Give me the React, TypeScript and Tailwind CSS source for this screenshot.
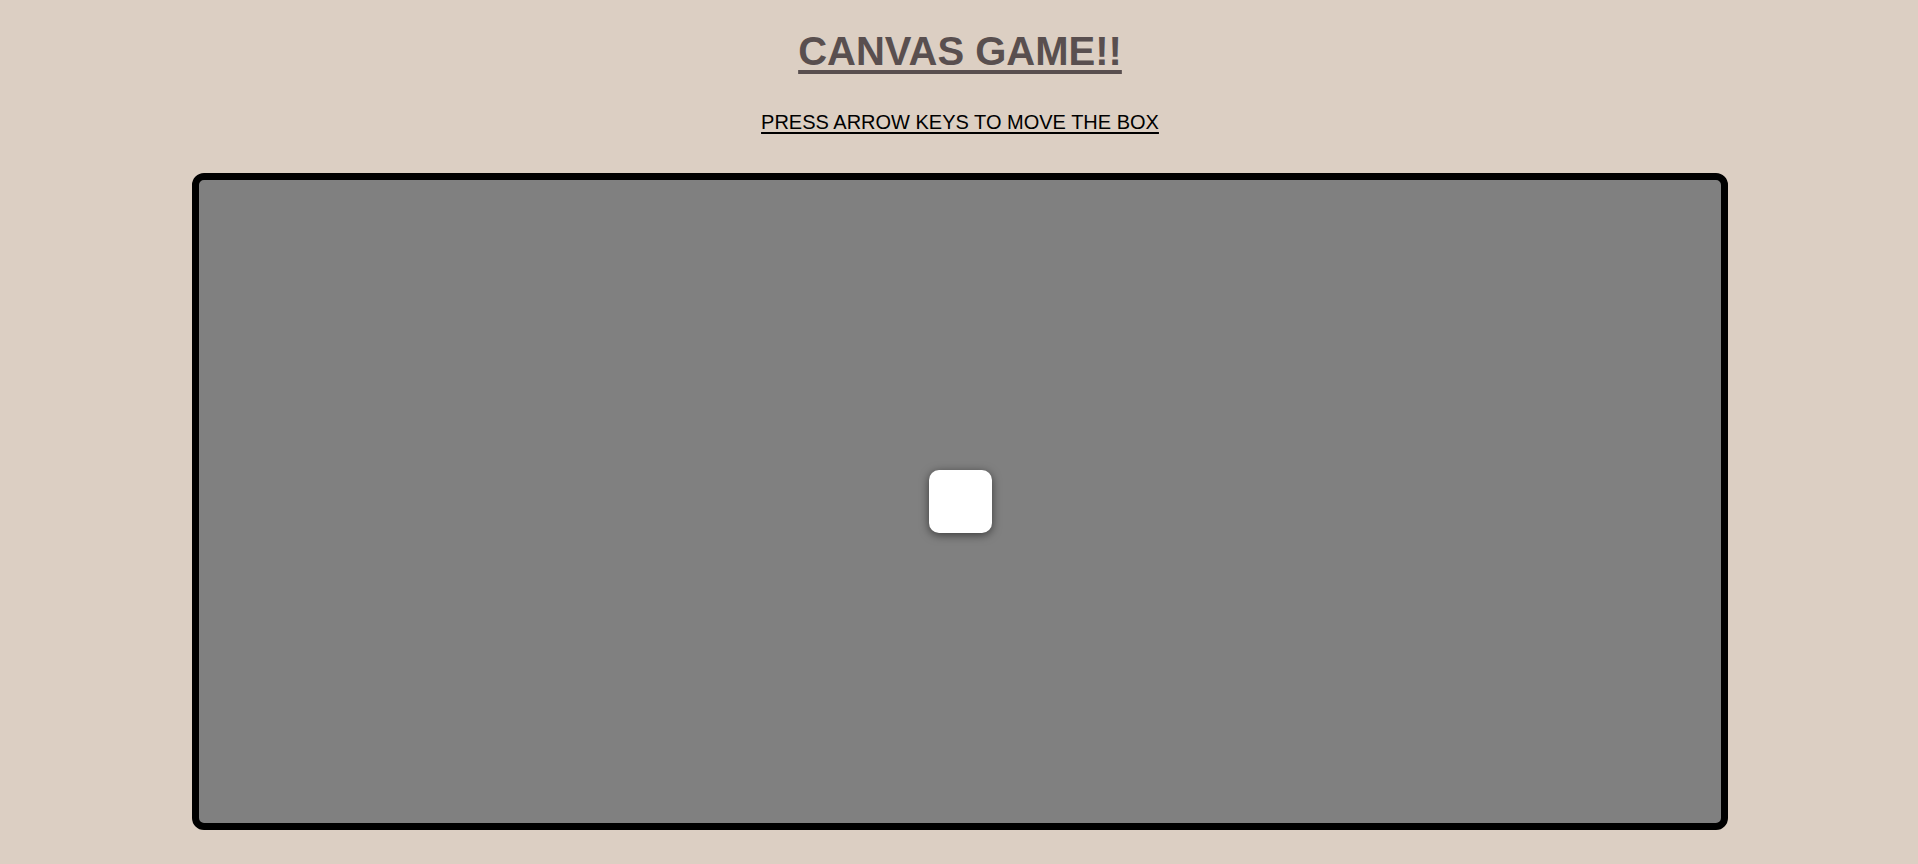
const App = () => {
  return (
    <div className="h-screen overflow-hidden bg-[#dccfc3] flex flex-col items-center font-['Liberation_Sans',Arial,sans-serif]">
      <h1 className="mt-[28px] ml-[2px] text-[40px] leading-[46px] font-bold text-[#594f4f] underline underline-offset-[5px] decoration-[4px]">
        CANVAS GAME!!
      </h1>
      <p className="mt-[36px] ml-[2px] text-[20px] leading-[24px] text-black underline underline-offset-[3px]">
        PRESS ARROW KEYS TO MOVE THE BOX
      </p>
      <div className="mt-[39px] ml-[2px] shrink-0 w-[1536px] h-[657px] border-[7px] border-black rounded-[12px] bg-[#808080] flex items-center justify-center">
        <div className="w-[63px] h-[63px] bg-white rounded-[10px] shadow-[0_2px_10px_rgba(0,0,0,0.55)]" />
      </div>
    </div>
  );
};

export default App;
